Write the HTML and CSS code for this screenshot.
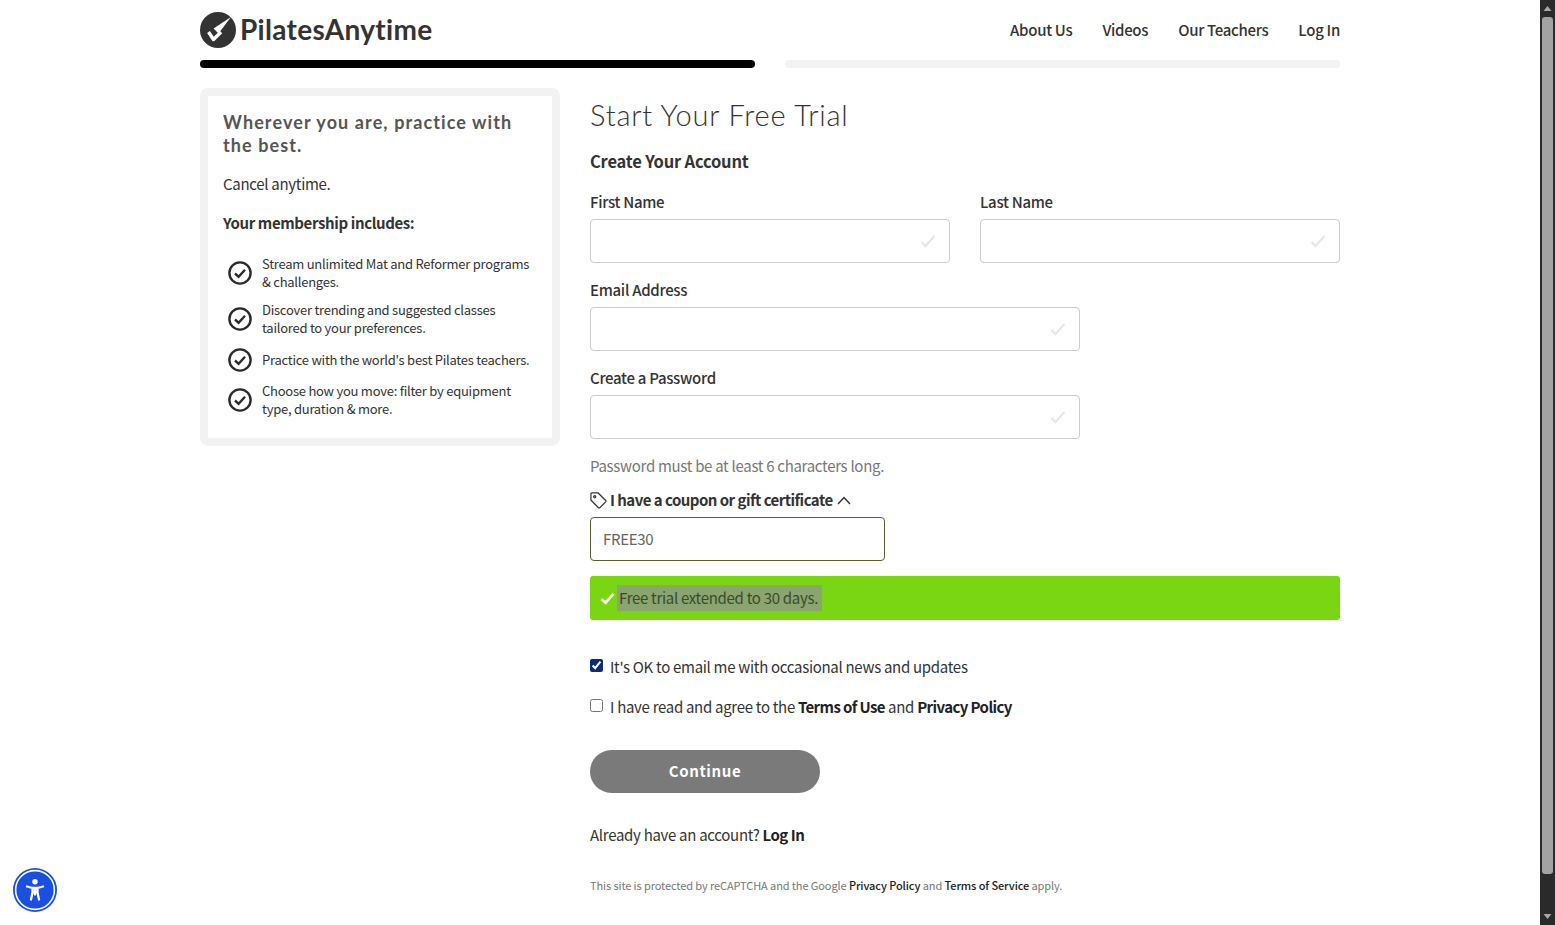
FILE: index.html
```html
<!DOCTYPE html>
<html lang="en">
<head>
<meta charset="utf-8">
<title>Start Your Free Trial - Pilates Anytime</title>
<link rel="stylesheet" href="styles.css">
</head>
<body>
<div class="app">
  <div class="page">
    <div class="container">
      <header class="header">
        <a class="logo" href="#">
          <svg class="logo-icon" viewBox="0 0 36 36" aria-hidden="true">
            <circle cx="18" cy="18" r="18" fill="#333"/>
            <path d="M31 5 L13.500 16.500 L18.500 21.500 Z" fill="#fff"/>
            <path d="M8.500 20 L13.500 27.500 L21 20" fill="none" stroke="#fff" stroke-width="3.400" stroke-linejoin="round"/>
          </svg>
          <span class="logo-text">PilatesAnytime</span>
        </a>
        <nav class="nav">
          <a href="#">About Us</a>
          <a href="#">Videos</a>
          <a href="#">Our Teachers</a>
          <a href="#">Log In</a>
        </nav>
      </header>
      <div class="progress">
        <div class="progress-bar is-active"></div>
        <div class="progress-bar"></div>
      </div>
      <div class="columns">
        <aside class="sidebar">
          <h2 class="sidebar-title">Wherever you are, practice with the best.</h2>
          <p class="sidebar-cancel">Cancel anytime.</p>
          <p class="sidebar-includes">Your membership includes:</p>
          <ul class="benefits">
            <li class="benefit">
              <svg class="benefit-icon" viewBox="0 0 24 24" aria-hidden="true"><circle cx="12" cy="12" r="10.600"/><path d="M7 12.500 L10.600 15.800 L17 8.800"/></svg>
              <span>Stream unlimited Mat and Reformer programs &amp; challenges.</span>
            </li>
            <li class="benefit">
              <svg class="benefit-icon" viewBox="0 0 24 24" aria-hidden="true"><circle cx="12" cy="12" r="10.600"/><path d="M7 12.500 L10.600 15.800 L17 8.800"/></svg>
              <span>Discover trending and suggested classes tailored to your preferences.</span>
            </li>
            <li class="benefit">
              <svg class="benefit-icon" viewBox="0 0 24 24" aria-hidden="true"><circle cx="12" cy="12" r="10.600"/><path d="M7 12.500 L10.600 15.800 L17 8.800"/></svg>
              <span>Practice with the world's best Pilates teachers.</span>
            </li>
            <li class="benefit">
              <svg class="benefit-icon" viewBox="0 0 24 24" aria-hidden="true"><circle cx="12" cy="12" r="10.600"/><path d="M7 12.500 L10.600 15.800 L17 8.800"/></svg>
              <span>Choose how you move: filter by equipment type, duration &amp; more.</span>
            </li>
          </ul>
        </aside>
        <main class="main">
          <h1 class="title">Start Your Free Trial</h1>
          <h2 class="subtitle">Create Your Account</h2>
          <form class="form">
            <div class="name-row">
              <div class="field">
                <label class="label">First Name</label>
                <div class="input"><svg class="input-check" viewBox="0 0 16 14" aria-hidden="true"><path d="M1.500 8 L5.500 12 L14.500 2"/></svg></div>
              </div>
              <div class="field">
                <label class="label">Last Name</label>
                <div class="input"><svg class="input-check" viewBox="0 0 16 14" aria-hidden="true"><path d="M1.500 8 L5.500 12 L14.500 2"/></svg></div>
              </div>
            </div>
            <div class="field field-wide">
              <label class="label">Email Address</label>
              <div class="input"><svg class="input-check" viewBox="0 0 16 14" aria-hidden="true"><path d="M1.500 8 L5.500 12 L14.500 2"/></svg></div>
            </div>
            <div class="field field-wide">
              <label class="label">Create a Password</label>
              <div class="input"><svg class="input-check" viewBox="0 0 16 14" aria-hidden="true"><path d="M1.500 8 L5.500 12 L14.500 2"/></svg></div>
            </div>
            <p class="hint">Password must be at least 6 characters long.</p>
            <div class="coupon-toggle">
              <svg class="tag-icon" viewBox="0 0 18 18" aria-hidden="true"><path d="M1 2.200 Q1 1 2.200 1 L8.600 1 L16.600 9 Q17.200 9.700 16.600 10.400 L10.400 16.600 Q9.700 17.200 9 16.600 L1 8.600 Z"/><circle cx="5" cy="5" r="1.100"/></svg>
              <span>I have a coupon or gift certificate</span>
              <svg class="chevron-icon" viewBox="0 0 14 9" aria-hidden="true"><path d="M1 8 L7 1.500 L13 8"/></svg>
            </div>
            <div class="coupon-input">FREE30</div>
            <div class="alert">
              <svg class="alert-check" viewBox="0 0 16 14" aria-hidden="true"><path d="M1.500 7.500 L5.800 11.500 L14.500 2"/></svg>
              <span class="alert-text">Free trial extended to 30 days.</span>
            </div>
            <label class="check check-first"><input class="checkbox" type="checkbox" checked><span>It's OK to email me with occasional news and updates</span></label>
            <label class="check check-second"><input class="checkbox" type="checkbox"><span>I have read and agree to the <a href="#">Terms of Use</a> and <a href="#">Privacy Policy</a></span></label>
            <button class="continue" type="button">Continue</button>
            <p class="login">Already have an account? <a href="#">Log In</a></p>
            <p class="recaptcha">This site is protected by reCAPTCHA and the Google <a href="#">Privacy Policy</a> and <a href="#">Terms of Service</a> apply.</p>
          </form>
        </main>
      </div>
    </div>
  </div>
  <div class="scrollbar">
    <svg class="scroll-arrow" viewBox="0 0 15 17" aria-hidden="true"><path d="M3.500 11 L7.500 6 L11.500 11 Z"/></svg>
    <div class="scroll-track"><div class="scroll-thumb"></div></div>
    <svg class="scroll-arrow" viewBox="0 0 15 17" aria-hidden="true"><path d="M3.500 6 L7.500 11 L11.500 6 Z"/></svg>
  </div>
  <button class="a11y" type="button" aria-label="Accessibility">
    <svg viewBox="0 0 44 44" aria-hidden="true">
      <circle cx="22" cy="22" r="22" fill="#1a50e0"/>
      <circle cx="22" cy="22" r="19.400" fill="none" stroke="#fff" stroke-width="1.600"/>
      <circle cx="22" cy="13.800" r="2.700" fill="#fff"/>
      <path d="M14 18.500 L19.500 20 L19.500 24.500 L18 31.500 M30 18.500 L24.500 20 L24.500 24.500 L26 31.500 M19.500 20 H24.500 M19.500 24 H24.500 M22 20 V26.500" fill="none" stroke="#fff" stroke-width="2.300" stroke-linecap="round" stroke-linejoin="round"/>
    </svg>
  </button>
</div>
</body>
</html>
```

FILE: styles.css
```css
* { box-sizing: border-box; }

html, body {
  margin: 0;
  height: 100%;
  overflow: hidden;
}

body {
  font-family: "Noto Sans CJK SC", "Noto Sans", sans-serif;
  font-size: 15px;
  line-height: 20px;
  letter-spacing: -0.3px;
  color: #333;
  background: #fff;
}

a { color: inherit; text-decoration: none; }
p, h1, h2, ul { margin: 0; padding: 0; }

.app {
  position: relative;
  display: flex;
  height: 925px;
}

.page {
  flex: 1;
  min-width: 0;
}

.container {
  width: 1140px;
  margin: 0 auto;
}

/* Header */
.header {
  display: flex;
  align-items: center;
  justify-content: space-between;
  height: 60px;
}

.logo {
  display: flex;
  align-items: center;
  gap: 4px;
  color: #333;
}

.logo-icon { width: 36px; height: 36px; display: block; }

.logo-text {
  font-family: "Lato", sans-serif;
  font-size: 28px;
  line-height: 34px;
  font-weight: 700;
  letter-spacing: 0.3px;
  margin-top: -2px;
}

.nav {
  display: flex;
  gap: 30px;
  font-weight: 500;
  color: #333;
}

/* Progress */
.progress {
  display: grid;
  grid-template-columns: 1fr 1fr;
  gap: 30px;
  height: 8px;
}

.progress-bar {
  border-radius: 4px;
  background: #f2f2f2;
}

.progress-bar.is-active { background: #000; }

/* Columns */
.columns {
  display: flex;
  gap: 30px;
  align-items: flex-start;
  margin-top: 20px;
}

/* Sidebar */
.sidebar {
  width: 360px;
  height: 358px;
  flex: none;
  padding: 15px 15px 0;
  border: 8px solid #f2f2f2;
  border-radius: 8px;
}

.sidebar-title {
  font-family: "Lato", sans-serif;
  font-size: 18px;
  line-height: 23px;
  font-weight: 700;
  letter-spacing: 1.100px;
  color: #555;
}

.sidebar-cancel { margin-top: 17px; }

.sidebar-includes {
  margin-top: 19px;
  font-weight: 700;
  letter-spacing: -0.38px;
}

.benefits {
  list-style: none;
  margin-top: 22px;
}

.benefit {
  display: flex;
  align-items: center;
  gap: 10px;
  min-height: 25px;
  margin-bottom: 10px;
  padding-left: 5px;
  font-size: 13px;
  line-height: 18px;
  letter-spacing: -0.25px;
}

.benefit-icon {
  width: 24px;
  height: 24px;
  flex: none;
  fill: none;
  stroke: #2b2b2b;
  stroke-width: 2.400;
}

/* Main */
.main { flex: 1; min-width: 0; }

.title {
  font-family: "Lato", sans-serif;
  font-size: 29px;
  line-height: 38px;
  font-weight: 300;
  letter-spacing: 0.8px;
  color: #333;
  margin-top: 8px;
}

.subtitle {
  margin-top: 16px;
  font-size: 16.500px;
  line-height: 22px;
  font-weight: 700;
  letter-spacing: -0.2px;
}

.form { margin-top: 20px; }

.name-row {
  display: flex;
  gap: 30px;
}

.name-row .field { flex: 1; }

.field-wide { width: 490px; margin-top: 17px; }

.label {
  display: block;
  font-weight: 500;
  line-height: 20px;
  margin-bottom: 7px;
}

.input {
  display: flex;
  align-items: center;
  justify-content: flex-end;
  height: 44px;
  padding-right: 13px;
  border: 1px solid #ccc;
  border-radius: 4px;
  background: #fff;
}

.input-check {
  width: 16px;
  height: 14px;
  fill: none;
  stroke: #e6e6e6;
  stroke-width: 2;
}

.hint {
  margin-top: 17px;
  color: #777;
}

.coupon-toggle {
  display: flex;
  align-items: center;
  gap: 3px;
  margin-top: 14px;
  font-weight: 700;
  letter-spacing: -0.53px;
}

.tag-icon {
  width: 17px;
  height: 17px;
  fill: none;
  stroke: #333;
  stroke-width: 1.300;
}

.chevron-icon {
  width: 14px;
  height: 9px;
  margin-left: 1px;
  fill: none;
  stroke: #333;
  stroke-width: 1.500;
}

.coupon-input {
  display: flex;
  align-items: center;
  width: 295px;
  height: 44px;
  margin-top: 7px;
  padding-left: 12px;
  border: 1px solid #5c5c30;
  border-radius: 4px;
  color: #666;
}

.alert {
  display: flex;
  align-items: center;
  gap: 2px;
  height: 44px;
  margin-top: 15px;
  padding-left: 10px;
  border-radius: 3px;
  background: #7ad513;
}

.alert-check {
  width: 15px;
  height: 13px;
  flex: none;
  fill: none;
  stroke: #f2fbe6;
  stroke-width: 3;
}

.alert-text {
  padding: 3px 4px 3px 2px;
  background: #8aa570;
  color: #3a4a2a;
}

.check {
  display: flex;
  align-items: flex-start;
  gap: 7px;
  line-height: 20px;
}

.check a { font-weight: 700; color: #222; letter-spacing: -0.6px; }

.check-first { margin-top: 37px; }
.check-second { margin-top: 20px; }

.checkbox {
  width: 13px;
  height: 13px;
  margin: 2px 0 0;
  flex: none;
  accent-color: #0a2a7a;
}

.continue {
  display: block;
  width: 230px;
  height: 43px;
  margin-top: 33px;
  padding: 0 0 2px;
  border: 0;
  border-radius: 22px;
  background: #7a7a7a;
  color: #fff;
  font: 700 15px/20px "Noto Sans CJK SC", "Noto Sans", sans-serif;
  letter-spacing: 0.6px;
}

.login { margin-top: 32px; }
.login a { font-weight: 700; color: #222; letter-spacing: -0.5px; }

.recaptcha {
  margin-top: 30px;
  font-size: 11px;
  line-height: 20px;
  letter-spacing: -0.1px;
  color: #777;
}

.recaptcha a { font-weight: 500; color: #222; }

/* Scrollbar */
.scrollbar {
  display: flex;
  flex-direction: column;
  width: 15px;
  flex: none;
  background: #2a2a2a;
}

.scroll-arrow {
  width: 15px;
  height: 17px;
  flex: none;
  fill: #a8a8a8;
}

.scroll-track {
  flex: 1;
  min-height: 0;
  padding: 0 2px;
}

.scroll-thumb {
  height: 857px;
  border-radius: 3px;
  background: #a3a3a3;
}

/* Accessibility button */
.a11y {
  position: absolute;
  left: 13px;
  top: 868px;
  width: 44px;
  height: 44px;
  padding: 0;
  border: 0;
  background: none;
}

.a11y svg { display: block; width: 44px; height: 44px; }
```
